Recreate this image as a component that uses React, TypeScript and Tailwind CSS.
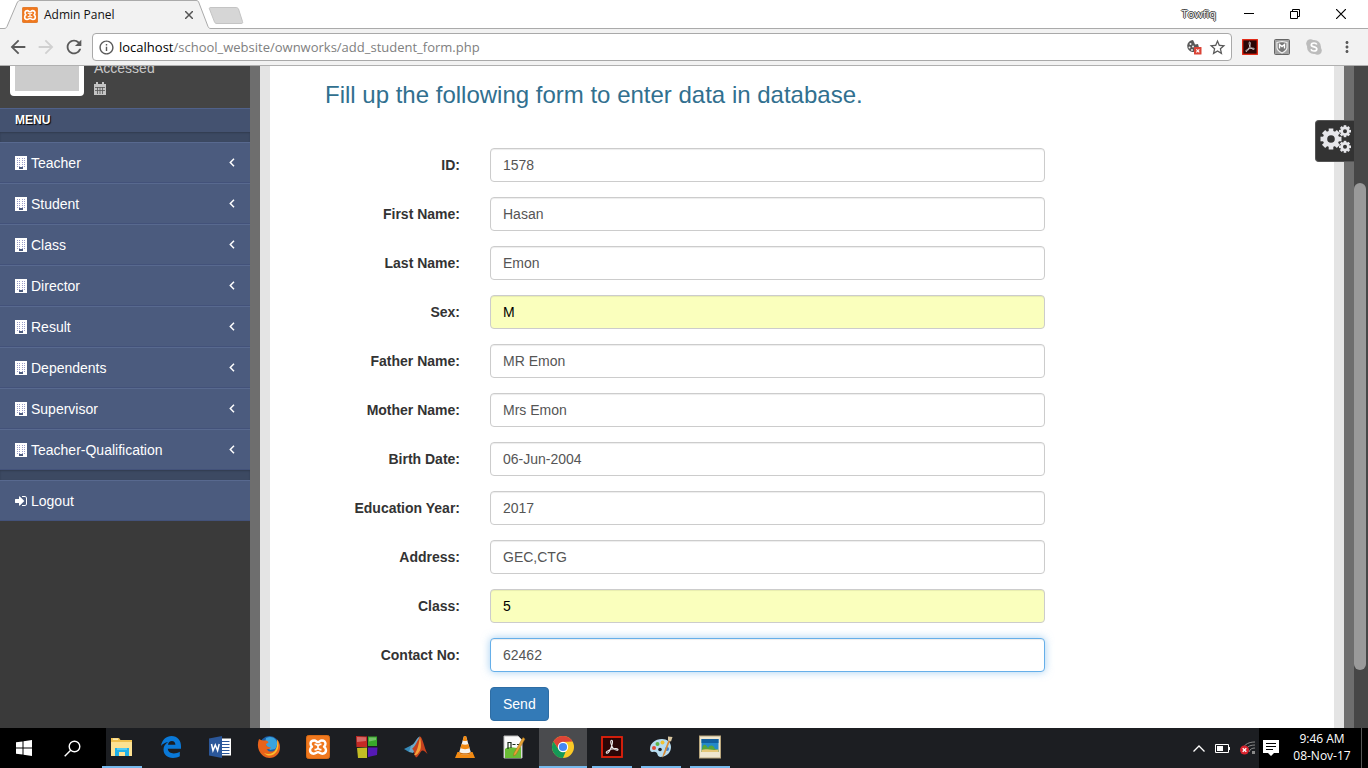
import React from "react";
import {
  MdArrowBack,
  MdArrowForward,
  MdInfoOutline,
  MdMoreVert,
  MdRefresh,
  MdStarBorder,
} from "react-icons/md";

function XamppIcon({ size }: { size: number }) {
  return (
    <svg width={size} height={size} viewBox="0 0 24 24" aria-hidden="true">
      <rect x="0.5" y="0.5" width="23" height="23" rx="2" fill="#f0781e" stroke="#d96a14" />
      <path
        d="M8.200 5.500C5.500 5.500 4.500 7.200 4.500 8.800c0 1.300.6 2.200 1.500 2.900-1.300.8-2 2-2 3.400 0 2.200 1.500 3.600 3.600 3.600 2.400 0 2.900-1.600 4.400-1.600s2 1.600 4.400 1.600c2.100 0 3.600-1.400 3.600-3.600 0-1.400-.7-2.600-2-3.400.9-.7 1.500-1.600 1.500-2.900 0-1.600-1-3.300-3.700-3.300-2 0-2.500 1.600-3.800 1.600S10.200 5.500 8.200 5.500Z"
        fill="none"
        stroke="#fff"
        strokeWidth="2.400"
        strokeLinejoin="round"
      />
      <path d="M8.500 9.300h1.500l2 1.500 2-1.500h1.500M8.500 14.700h1.500l2-1.500 2 1.500h1.500M12 10.500v3" fill="none" stroke="#fff" strokeWidth="1.700" />
    </svg>
  );
}

function BuildingIcon() {
  return (
    <svg width="12" height="14" viewBox="0 0 12 14" aria-hidden="true">
      <path d="M0 0h12v14H0z" fill="#fff" />
      <g fill="#9a9cc8">
        {[2, 4, 6, 8, 10].map((y) =>
          [2, 4, 7, 9].map((x) => <rect key={`${x}-${y}`} x={x} y={y} width="1" height="1" />),
        )}
      </g>
      <path d="M4 11h4v2H4z" fill="#4b5b7e" />
    </svg>
  );
}

function SignInIcon() {
  return (
    <svg width="12" height="12" viewBox="0 128 1536 1536" fill="#fff" aria-hidden="true">
      <path d="M1184 896q0 26-19 45l-544 544q-19 19-45 19t-45-19-19-45v-288H64q-26 0-45-19T0 1088V704q0-26 19-45t45-19h448V352q0-26 19-45t45-19 45 19l544 544q19 19 19 45zm352-352v704q0 119-84.500 203.500T1248 1536H928q-13 0-22.500-9.500T896 1504q0-4-1-20t-.5-26.500 3-23.500 10-19.500 20.500-6.500h320q66 0 113-47t47-113V544q0-66-47-113t-113-47H936l-11.500-1-11.500-3-8-5.500-7-9-2-13.500q0-4-1-20t-.5-26.500 3-23.500 10-19.500T928 256h320q119 0 203.500 84.500T1536 544z" />
    </svg>
  );
}

function AngleLeftIcon() {
  return (
    <svg width="6" height="9" viewBox="0 0 6 9" aria-hidden="true">
      <path d="M5 .8 1.300 4.500 5 8.200" fill="none" stroke="#fff" strokeWidth="1.500" />
    </svg>
  );
}

function Gear({ cx, cy, r, hole, tooth }: { cx: number; cy: number; r: number; hole: number; tooth: number }) {
  const ring = r * 0.78 - hole;
  return (
    <g>
      <circle cx={cx} cy={cy} r={hole + ring / 2} fill="none" stroke="#e6e6ea" strokeWidth={ring} />
      {[0, 45, 90, 135, 180, 225, 270, 315].map((angle) => (
        <rect
          key={angle}
          x={cx - tooth / 2}
          y={cy - r}
          width={tooth}
          height={r * 0.35}
          fill="#e6e6ea"
          transform={`rotate(${angle} ${cx} ${cy})`}
        />
      ))}
    </g>
  );
}

function CogsIcon() {
  return (
    <svg width="31" height="29" viewBox="0 0 31 29" aria-hidden="true">
      <Gear cx={11} cy={14} r={10.5} hole={3.8} tooth={4.6} />
      <Gear cx={25} cy={6.2} r={6} hole={2} tooth={2.6} />
      <Gear cx={25} cy={21.8} r={6} hole={2} tooth={2.6} />
    </svg>
  );
}

function CalendarIcon() {
  return (
    <svg width="12" height="13" viewBox="0 0 12 13" aria-hidden="true">
      <path d="M0 2h12v11H0z" fill="#c4c4c4" />
      <path d="M2 0h2v3H2zM8 0h2v3H8z" fill="#c4c4c4" />
      <path d="M1 5.500h10M1 8.500h10M3.500 5v7M6 5v7M8.500 5v7" stroke="#555" strokeWidth="0.800" />
    </svg>
  );
}

function AcrobatIcon({ size }: { size: number }) {
  return (
    <svg width={size} height={size} viewBox="0 0 22 22" aria-hidden="true">
      <rect x="1" y="1" width="20" height="20" fill="#2b0606" stroke="#e4210c" strokeWidth="1.800" />
      <path
        d="M10.500 4.200c1.600 0 1 3.200.2 5.600-1 3-2.600 6.200-4 7.200-1.400.8-2-.6-.7-1.700 2-1.700 6-2.900 9.200-2.700 2.500.2 2.300 1.900.6 1.700-2.600-.3-5-3.500-5.800-6.600-.4-1.800-.4-3.500.5-3.500Z"
        fill="none"
        stroke="#eee"
        strokeWidth="1.100"
      />
    </svg>
  );
}

function CookieBlockedIcon() {
  return (
    <svg width="16" height="16" viewBox="0 0 16 16" aria-hidden="true">
      <path d="M7 1a6 6 0 1 0 6 7.500l-1-3.500-3 .5-1-2.500Z" fill="#585858" />
      <g fill="#f2f2f2">
        <circle cx="4.500" cy="5" r="1" />
        <circle cx="3.500" cy="8.500" r="1" />
        <circle cx="7" cy="7.500" r="1" />
        <circle cx="6" cy="11" r="0.900" />
      </g>
      <rect x="8" y="8" width="7.500" height="7.500" rx="0.500" fill="#db4437" />
      <path d="m10.300 10.300 3 3m0-3-3 3" stroke="#fff" strokeWidth="1.200" />
    </svg>
  );
}

function ShieldIcon() {
  return (
    <svg width="16" height="16" viewBox="0 0 16 16" aria-hidden="true">
      <rect x="0.500" y="0.500" width="15" height="15" rx="1" fill="#a2a2a2" stroke="#666" />
      <path d="M3 3.500 8 2.500l5 1v5c0 2.500-2 4-5 5.500-3-1.500-5-3-5-5.500Z" fill="#777" stroke="#f1f1f1" strokeWidth="1.200" />
      <path d="M5.500 9.500V5.500L8 7.500l2.500-2v4" fill="none" stroke="#fff" strokeWidth="1.400" />
    </svg>
  );
}

function SkypeIcon() {
  return (
    <svg width="16" height="16" viewBox="0 0 16 16" aria-hidden="true">
      <g fill="#bcbcbc">
        <circle cx="8" cy="8" r="7" />
        <circle cx="4.500" cy="4.500" r="4.300" />
        <circle cx="11.500" cy="11.500" r="4.300" />
      </g>
      <path
        d="M10.800 5.500c-.4-1-1.400-1.500-2.800-1.500-1.600 0-2.700.7-2.700 1.900 0 2.600 5.500 1.300 5.500 4 0 1.300-1.200 2.100-2.900 2.100-1.600 0-2.600-.7-2.900-1.800"
        fill="none"
        stroke="#fff"
        strokeWidth="1.700"
      />
    </svg>
  );
}

function FolderIcon() {
  return (
    <svg width="24" height="24" viewBox="0 0 24 24" aria-hidden="true">
      <path d="M1 3h8l1.500 2H22v16H1z" fill="#f0c14f" />
      <path d="M1 7h21v14H1z" fill="#fde292" />
      <path d="M3 3.500h5v1.300H3z" fill="#fff3c4" />
      <path d="M5 13h14v8h-4v-4H9v4H5z" fill="#20b1e8" />
      <path d="M7 13h10v2H7z" fill="#53cdf5" />
    </svg>
  );
}

function EdgeIcon() {
  return (
    <svg width="24" height="24" viewBox="0 0 24 24" aria-hidden="true">
      <path
        d="M2 11C3 4.500 7.500 1 12.500 1 18.500 1 22 5.500 22 11v2.800H8.800c.2 3 2.700 4.600 6 4.600 2.200 0 4.300-.6 6-1.700v4.600c-1.900 1-4.200 1.600-6.800 1.600-5.900 0-9.500-3.400-9.500-8.400 0-3.300 1.700-6 4.700-7.600C6 7.500 3.500 8.800 2 11Zm7-1.200h7.400C16.400 7.300 15 5.900 12.900 5.900S9.300 7.400 9 9.800Z"
        fill="#0a79d8"
      />
    </svg>
  );
}

function WordIcon() {
  return (
    <svg width="24" height="24" viewBox="0 0 24 24" aria-hidden="true">
      <path d="M12 3.500h11v17H12z" fill="#fff" />
      <path d="M14 6.500h7.500M14 9.500h7.500M14 12.500h7.500M14 15.500h7.500M14 18.500h7.500" stroke="#2b579a" />
      <path d="M1 3.500 14 1v22L1 20.500z" fill="#2b579a" />
      <path d="m3.500 9 1.500 6.500 2.300-5.500 2.300 5.500L11.200 9" fill="none" stroke="#fff" strokeWidth="1.500" />
    </svg>
  );
}

function FirefoxIcon() {
  return (
    <svg width="24" height="24" viewBox="0 0 24 24" aria-hidden="true">
      <circle cx="12.500" cy="11" r="10" fill="#1c5fa8" />
      <path d="M9 3c4-2 8-1 10 2 2 2.500 1 7-1 9l-5 1-5-6Z" fill="#3aa3dd" />
      <path
        d="M2 4c-1.500 4-1.500 8 0 11.500 2 4.500 6 7.500 10.500 7.500C18.500 23 23 18.500 23 12.500c0-3.500-1-6-3-8 1 4 .5 8-2 10.500-2.500 2.400-7 2-8.500-1 2 .5 3.500 0 4.500-1.500-2-.5-4-.5-5-2.500 0-1.500 1.500-1.500 2.500-2.500C11 6 9.500 5.500 8 5.500 5.500 5.500 4 5 2 4Z"
        fill="#e8631b"
      />
      <path d="M20 4.500c3 5.500 1 12-3.500 15C13 21.500 9 20.500 7 18c5 2.500 10 .5 12-4 1.300-3 1.500-6 1-9.500Z" fill="#fbc02d" />
    </svg>
  );
}

function CubesIcon() {
  return (
    <svg width="24" height="24" viewBox="0 0 24 24" aria-hidden="true">
      <path d="m1 1 11 .5V12H1.500z" fill="#c52a25" />
      <path d="M13 1.500h9V11h-9z" fill="#38a829" />
      <path d="m2 13 10-.5V23H3z" fill="#c3bc24" />
      <path d="M13 12.500h9.500L22 20l-9 2z" fill="#5519b5" />
      <path d="m2 2 9 .3V6L2 7zM14 2.500h7V5l-7 1.500z" fill="#fff" opacity="0.300" />
    </svg>
  );
}

function MatlabIcon() {
  return (
    <svg width="24" height="24" viewBox="0 0 24 24" aria-hidden="true">
      <path d="m0 14 7-3.500 3 3L5 17Z" fill="#3689b8" />
      <path d="M7 10.500c4-1 5.500-8.500 9-9l-4 13-3 3.500-4-1Z" fill="#6ba9c9" />
      <path d="M16 1.500c-2 3-4 9-8 12.500 2 0 2 5 4 8.500 3-1 4.500-7 6.500-7s2.500 1.500 5 3.500C20 12 18.500 2 16 1.500Z" fill="#c6411e" />
      <path d="M16 2c-1 5-2 13-6 18 3 1 4-2 6-4.500C17.500 13 17 6 16 2Z" fill="#f6a03a" />
    </svg>
  );
}

function ConeIcon() {
  return (
    <svg width="24" height="24" viewBox="0 0 24 24" aria-hidden="true">
      <path d="M4.500 17h15l2.500 6H2z" fill="#f28a12" />
      <path d="M11 1h2l5 17c-2 2-10 2-12 0z" fill="#f7f3ec" />
      <path d="M11 1h2l1.300 4.500c-1 .7-3.600.7-4.600 0zM8.600 9c2 1 5 1 6.800 0l1.200 4c-2 1.500-7 1.500-9.200 0z" fill="#f28a12" />
      <path d="M6.300 17c2 1.700 9.400 1.700 11.400 0l.3 1c-2 2-10 2-12 0z" fill="#c96a08" />
    </svg>
  );
}

function NotepadIcon() {
  return (
    <svg width="24" height="24" viewBox="0 0 24 24" aria-hidden="true">
      <path d="M2 1h14l4 4v18H2z" fill="#fbfbfb" stroke="#bbb" />
      <path d="M3 14c5-4 11 1 16-2v11H3z" fill="#69bd35" />
      <path d="M6 14V7.500h3V13M10.500 9.500h3M15 9.500h3" fill="none" stroke="#1c2b1c" strokeWidth="1.200" />
      <path d="M21 2.500 12 18l-.5 3 2.500-1.500L23 4z" fill="#e7a435" stroke="#a06a18" strokeWidth="0.500" />
    </svg>
  );
}

function ChromeIcon() {
  return (
    <svg width="24" height="24" viewBox="0 0 24 24" aria-hidden="true">
      <circle cx="12" cy="12" r="11" fill="#fbc926" />
      <path d="M2.470 6.500A11 11 0 0 1 21.530 6.500L12 7 7.700 14.500Z" fill="#dc4437" />
      <path d="M2.470 6.500 7.700 14.500l4.300 2.500h2.500L12 23A11 11 0 0 1 2.470 6.500Z" fill="#159957" />
      <circle cx="12" cy="12" r="5.200" fill="#fff" />
      <circle cx="12" cy="12" r="4.100" fill="#4687f4" />
    </svg>
  );
}

function PaintIcon() {
  return (
    <svg width="24" height="24" viewBox="0 0 24 24" aria-hidden="true">
      <path d="M13 4C6 4 1 8.500 1 14c0 2 1 3.500 3 3 2.500-.6 4 .5 4.500 2.500.5 2 2 2.800 5 2.300 5-1 8.500-4.800 8.500-9.800 0-5-4-8-9-8Z" fill="#b7dcf0" />
      <circle cx="5" cy="13" r="2" fill="#e04a34" />
      <circle cx="8.500" cy="9" r="2" fill="#5fb548" />
      <circle cx="13.500" cy="7.500" r="2" fill="#f1c232" />
      <circle cx="11" cy="14.500" r="1.800" fill="#1c1e22" />
      <circle cx="18" cy="14" r="2" fill="#3d7ed0" />
      <path d="m19.500 5-5 13-1.500 5 3-4 5-13z" fill="#d98a35" />
      <path d="M19 1.500 23.500 2 22 6.500l-3-1z" fill="#d9c6a0" />
    </svg>
  );
}

function PhotoIcon() {
  return (
    <svg width="24" height="24" viewBox="0 0 24 24" aria-hidden="true">
      <rect x="1.500" y="1" width="21" height="22" fill="#efe6cf" stroke="#b9a67c" />
      <path d="M3.500 4h17v13h-17z" fill="#2489c9" />
      <path d="M3.500 4h17v4h-17z" fill="#125f9f" />
      <path d="M4 14c1-6 4-5 6-1 2-4 6-3 7 1l3.500 1v2h-17z" fill="#58a53a" />
      <path d="M3.500 15c5-2 10 1 17-.5V17h-17z" fill="#e5c779" />
    </svg>
  );
}

type TaskApp = { name: string; icon: React.ReactNode; state?: "open" | "active" };

const taskApps: TaskApp[] = [
  { name: "File Explorer", icon: <FolderIcon />, state: "open" },
  { name: "Edge", icon: <EdgeIcon /> },
  { name: "Word", icon: <WordIcon /> },
  { name: "Firefox", icon: <FirefoxIcon /> },
  { name: "XAMPP", icon: <XamppIcon size={24} /> },
  { name: "Cubes", icon: <CubesIcon /> },
  { name: "MATLAB", icon: <MatlabIcon /> },
  { name: "VLC", icon: <ConeIcon /> },
  { name: "Notepad++", icon: <NotepadIcon /> },
  { name: "Chrome", icon: <ChromeIcon />, state: "active" },
  { name: "Acrobat", icon: <AcrobatIcon size={22} />, state: "open" },
  { name: "Paint", icon: <PaintIcon />, state: "open" },
  { name: "Photos", icon: <PhotoIcon />, state: "open" },
];

const menuItems = [
  "Teacher",
  "Student",
  "Class",
  "Director",
  "Result",
  "Dependents",
  "Supervisor",
  "Teacher-Qualification",
];

type Field = { id: string; label: string; value: string; look?: "filled" | "focused" };

const fields: Field[] = [
  { id: "student-id", label: "ID:", value: "1578" },
  { id: "first-name", label: "First Name:", value: "Hasan" },
  { id: "last-name", label: "Last Name:", value: "Emon" },
  { id: "sex", label: "Sex:", value: "M", look: "filled" },
  { id: "father-name", label: "Father Name:", value: "MR Emon" },
  { id: "mother-name", label: "Mother Name:", value: "Mrs Emon" },
  { id: "birth-date", label: "Birth Date:", value: "06-Jun-2004" },
  { id: "education-year", label: "Education Year:", value: "2017" },
  { id: "address", label: "Address:", value: "GEC,CTG" },
  { id: "class", label: "Class:", value: "5", look: "filled" },
  { id: "contact", label: "Contact No:", value: "62462", look: "focused" },
];

const fieldLooks = {
  plain: "border-[#ccc] bg-white text-[#555] shadow-[inset_0_1px_1px_rgba(0,0,0,0.075)]",
  filled: "border-[#ccc] bg-[#faffbd] text-black shadow-[inset_0_1px_1px_rgba(0,0,0,0.075)]",
  focused:
    "border-[#66afe9] bg-white text-[#555] shadow-[inset_0_1px_1px_rgba(0,0,0,0.075),0_0_8px_rgba(102,175,233,0.6)]",
};

function TabStrip() {
  return (
    <div className="flex h-[29px] shrink-0 items-start bg-white font-['Open_Sans','Noto_Sans',sans-serif]">
      <div className="relative h-[29px] w-[246px]">
        <svg className="absolute inset-0" width="246" height="29" viewBox="0 0 246 29" aria-hidden="true">
          <path d="M0 28.500h4c2 0 2.500-1 3-2L17 3c1-2 2-2.500 3-2.500h176c1.500 0 2.500.5 3 2.500l9 23.500c.5 1.500 1.500 2 3 2V29H0Z" fill="#f2f2f2" />
          <path d="M0 28.500h4c2 0 2.500-1 3-2L17 3c1-2 2-2.500 3-2.500h176c1.500 0 2.500.5 3 2.500l9 23.500c.5 1.500 1.500 2 3 2h35" fill="none" stroke="#aaa" />
          <path d="M211 7.500h25c1 0 2 .5 2.500 1.500l4 12.500c.5 1.500 0 2-1.500 2h-24c-1.500 0-2-.5-2.500-1.500L209.500 9c-.5-1 0-1.500 1.500-1.500Z" fill="#d6d6d6" stroke="#c4c4c4" />
        </svg>
        <div className="relative flex h-[30px] w-[218px] items-center pl-[22px] pr-[21px]">
          <XamppIcon size={16} />
          <span className="ml-1.5 flex-1 text-xs text-[#111]">Admin Panel</span>
          <button type="button" aria-label="Close tab" className="flex h-4 w-4 items-center justify-center">
            <svg width="8" height="8" viewBox="0 0 8 8" aria-hidden="true">
              <path d="m0 0 8 8M8 0 0 8" stroke="#555" strokeWidth="1.500" />
            </svg>
          </button>
        </div>
      </div>
      <div className="flex h-[29px] flex-1 items-center justify-end border-b border-[#aaa] pr-1">
        <span className="mr-2.5 text-[11px] text-[#f4f4f4] [text-shadow:1px_0_0_#444,-1px_0_0_#444,0_1px_0_#444,0_-1px_0_#444]">
          Towfiq
        </span>
        <button type="button" aria-label="Minimize" className="flex h-7 w-[46px] items-center justify-center">
          <svg width="10" height="10" viewBox="0 0 10 10" aria-hidden="true"><path d="M0 4.500h10" stroke="#000" /></svg>
        </button>
        <button type="button" aria-label="Restore" className="flex h-7 w-[46px] items-center justify-center">
          <svg width="10" height="10" viewBox="0 0 10 10" fill="none" stroke="#000" aria-hidden="true">
            <path d="M.5 2.500h7v7h-7zM2.500 2.500v-2h7v7h-2" />
          </svg>
        </button>
        <button type="button" aria-label="Close" className="flex h-7 w-[46px] items-center justify-center">
          <svg width="10" height="10" viewBox="0 0 10 10" aria-hidden="true"><path d="m0 0 10 10M10 0 0 10" stroke="#000" strokeWidth="1.200" /></svg>
        </button>
      </div>
    </div>
  );
}

function Toolbar() {
  return (
    <div className="flex h-[37px] shrink-0 items-center border-b border-[#b0b0b0] bg-[#f2f2f2] pl-[7px] pr-3 text-[#5a5a5a]">
      <div className="flex gap-1.5">
        <button type="button" aria-label="Back"><MdArrowBack size={22} /></button>
        <button type="button" aria-label="Forward" className="text-[#d0d0d0]"><MdArrowForward size={22} /></button>
        <button type="button" aria-label="Reload"><MdRefresh size={22} /></button>
      </div>
      <div className="ml-[7px] flex h-7 flex-1 items-center rounded-sm border border-[#a9a9a9] bg-white pl-[5px] pr-1">
        <MdInfoOutline size={17} />
        <div className="ml-1 flex-1 font-['Open_Sans','Noto_Sans',sans-serif] text-[13px] leading-5 text-[#808080]">
          <span className="text-black">localhost</span>/school_website/ownworks/add_student_form.php
        </div>
        <CookieBlockedIcon />
        <button type="button" aria-label="Bookmark" className="ml-1.5"><MdStarBorder size={19} /></button>
      </div>
      <div className="ml-2.5 flex items-center gap-4">
        <AcrobatIcon size={16} />
        <ShieldIcon />
        <SkypeIcon />
        <button type="button" aria-label="Menu"><MdMoreVert size={18} /></button>
      </div>
    </div>
  );
}

function Sidebar() {
  const row =
    "flex h-[41px] items-center border-b border-t border-b-[#43527a] border-t-[#58698f] bg-[#4b5b7e] px-[15px] text-sm text-white";
  return (
    <aside className="flex w-[250px] shrink-0 flex-col bg-[#3a3a3a]">
      <div className="flex h-[42px] items-end overflow-hidden bg-[#444] px-2.5">
        <div className="mb-3 h-[74px] w-[74px] rounded border-[5px] border-white bg-[#ccc]" />
        <div className="mb-2.5 ml-2.5 text-sm leading-5 text-[#c8c8c8]">
          <p>Accessed</p>
          <p className="flex h-5 items-center"><CalendarIcon /></p>
        </div>
      </div>
      <h2 className="h-6 border-t border-[#50618a] bg-[#445270] px-[15px] text-xs font-bold leading-[22px] text-white [text-shadow:1px_1px_1px_#000]">
        MENU
      </h2>
      <div className="h-2.5 bg-[#3c4962] shadow-[inset_0_1px_2px_rgba(0,0,0,0.2)]" />
      <nav>
        {menuItems.map((item) => (
          <a key={item} href="#" className={row}>
            <BuildingIcon />
            <span className="ml-1 flex-1">{item}</span>
            <AngleLeftIcon />
          </a>
        ))}
        <div className="h-2.5 bg-[#3c4962] shadow-[inset_0_1px_2px_rgba(0,0,0,0.2)]" />
        <a href="#" className={row}>
          <SignInIcon />
          <span className="ml-1">Logout</span>
        </a>
      </nav>
    </aside>
  );
}

function StudentForm() {
  return (
    <main className="min-w-0 flex-1 overflow-hidden bg-white">
      <h1 className="pl-[55px] pt-4 text-2xl leading-[26px] text-[#31708f]">
        Fill up the following form to enter data in database.
      </h1>
      <form className="mt-10 flex max-w-[775px] flex-col gap-[15px]" onSubmit={(e) => e.preventDefault()}>
        {fields.map((field) => (
          <div key={field.id} className="flex items-center gap-[30px]">
            <label htmlFor={field.id} className="w-[190px] text-right text-sm font-bold text-[#333]">
              {field.label}
            </label>
            <input
              id={field.id}
              type="text"
              defaultValue={field.value}
              className={`h-[34px] min-w-0 flex-1 rounded border px-3 text-sm outline-none ${fieldLooks[field.look ?? "plain"]}`}
            />
          </div>
        ))}
        <div className="pl-[220px]">
          <button type="submit" className="h-[34px] rounded border border-[#2e6da4] bg-[#337ab7] px-3 text-sm text-white">
            Send
          </button>
        </div>
      </form>
    </main>
  );
}

function Taskbar() {
  return (
    <footer className="flex h-10 shrink-0 bg-[linear-gradient(to_right,#000_106px,#1c1e22_106px)] text-white">
      <button type="button" aria-label="Start" className="flex w-12 items-center justify-center">
        <svg width="16" height="16" viewBox="0 0 16 16" fill="#fff" aria-hidden="true">
          <path d="M0 2.300 6.500 1.400v6.100H0zM7.500 1.200 16 0v7.500H7.500zM0 8.500h6.500v6.100L0 13.700zM7.500 8.500H16V16l-8.500-1.200z" />
        </svg>
      </button>
      <button type="button" aria-label="Search" className="mr-0.5 flex w-12 items-center justify-center">
        <svg width="17" height="17" viewBox="0 0 17 17" fill="none" stroke="#fff" strokeWidth="1.400" aria-hidden="true">
          <circle cx="10.500" cy="6.500" r="5.300" />
          <path d="m6.700 10.300-6 6" />
        </svg>
      </button>
      <div className="flex flex-1 gap-px">
        {taskApps.map((app) => (
          <button
            key={app.name}
            type="button"
            aria-label={app.name}
            className={`flex w-12 flex-col items-center ${app.state === "active" ? "bg-[#4a4b4e]" : ""}`}
          >
            <span className="flex w-full flex-1 items-center justify-center">{app.icon}</span>
            <span
              className={`h-0.5 ${app.state === "active" ? "w-full bg-[#76b9ed]" : app.state === "open" ? "w-10 bg-[#76b9ed]" : "w-10"}`}
            />
          </button>
        ))}
      </div>
      <div className="flex items-center gap-2.5 pr-1">
        <svg width="12" height="7" viewBox="0 0 12 7" aria-hidden="true"><path d="m.5 6.500 5.500-5.500 5.500 5.500" fill="none" stroke="#fff" strokeWidth="1.300" /></svg>
        <svg width="15" height="9" viewBox="0 0 15 9" aria-hidden="true">
          <path d="M.5.5h13v8H.5z" fill="none" stroke="#fff" />
          <path d="M2 2h6v5H2zM14 3h1v3h-1z" fill="#fff" />
        </svg>
        <svg width="15" height="14" viewBox="0 0 15 14" aria-hidden="true">
          <path d="M2 8C5 3 9 1 15 1M6 8c2-3 5-4 9-4M9 11c1-3 3-4 6-4" fill="none" stroke="#8a8a8a" />
          <path d="M12 10h3v3h-3z" fill="#8a8a8a" />
          <circle cx="4.500" cy="9" r="4.500" fill="#d9232e" />
          <path d="m2.700 7.200 3.600 3.600m0-3.600-3.600 3.600" stroke="#fff" strokeWidth="1.300" />
        </svg>
      </div>
      <div className="flex items-center bg-black pl-1 pr-1.5">
        <svg width="16" height="16" viewBox="0 0 16 16" aria-hidden="true">
          <path d="M0 0h16v13h-5l-3 3-3-3H0z" fill="#fff" />
          <path d="M3 3.500h10M3 6.500h10M3 9.500h7" stroke="#000" />
        </svg>
        <div className="w-[82px] pb-0.5 pl-1 text-center font-['Open_Sans','Noto_Sans',sans-serif] text-xs leading-[17px]">
          <p>9:46 AM</p>
          <p>08-Nov-17</p>
        </div>
        <div className="h-10 w-px bg-[#555]" />
      </div>
    </footer>
  );
}

export default function App() {
  return (
    <div className="flex h-screen flex-col overflow-hidden font-['Liberation_Sans',Arial,sans-serif]">
      <TabStrip />
      <Toolbar />
      <div className="relative flex min-h-0 flex-1 bg-[#6e6e6e]">
        <Sidebar />
        <div className="mx-2.5 flex min-w-0 flex-1 border-x-[10px] border-[#e4e4e4]">
          <StudentForm />
        </div>
        <div className="w-3.5 shrink-0 bg-[#474747] pr-0.5 pt-[117px]">
          <div className="h-[487px] rounded-full bg-[#9a9a9a]" />
        </div>
        <button
          type="button"
          aria-label="Theme settings"
          className="absolute right-3.5 top-[54px] flex h-[42px] w-[39px] items-center justify-center rounded-l border border-r-0 border-[#555] bg-[#333] pb-1"
        >
          <CogsIcon />
        </button>
      </div>
      <Taskbar />
    </div>
  );
}
